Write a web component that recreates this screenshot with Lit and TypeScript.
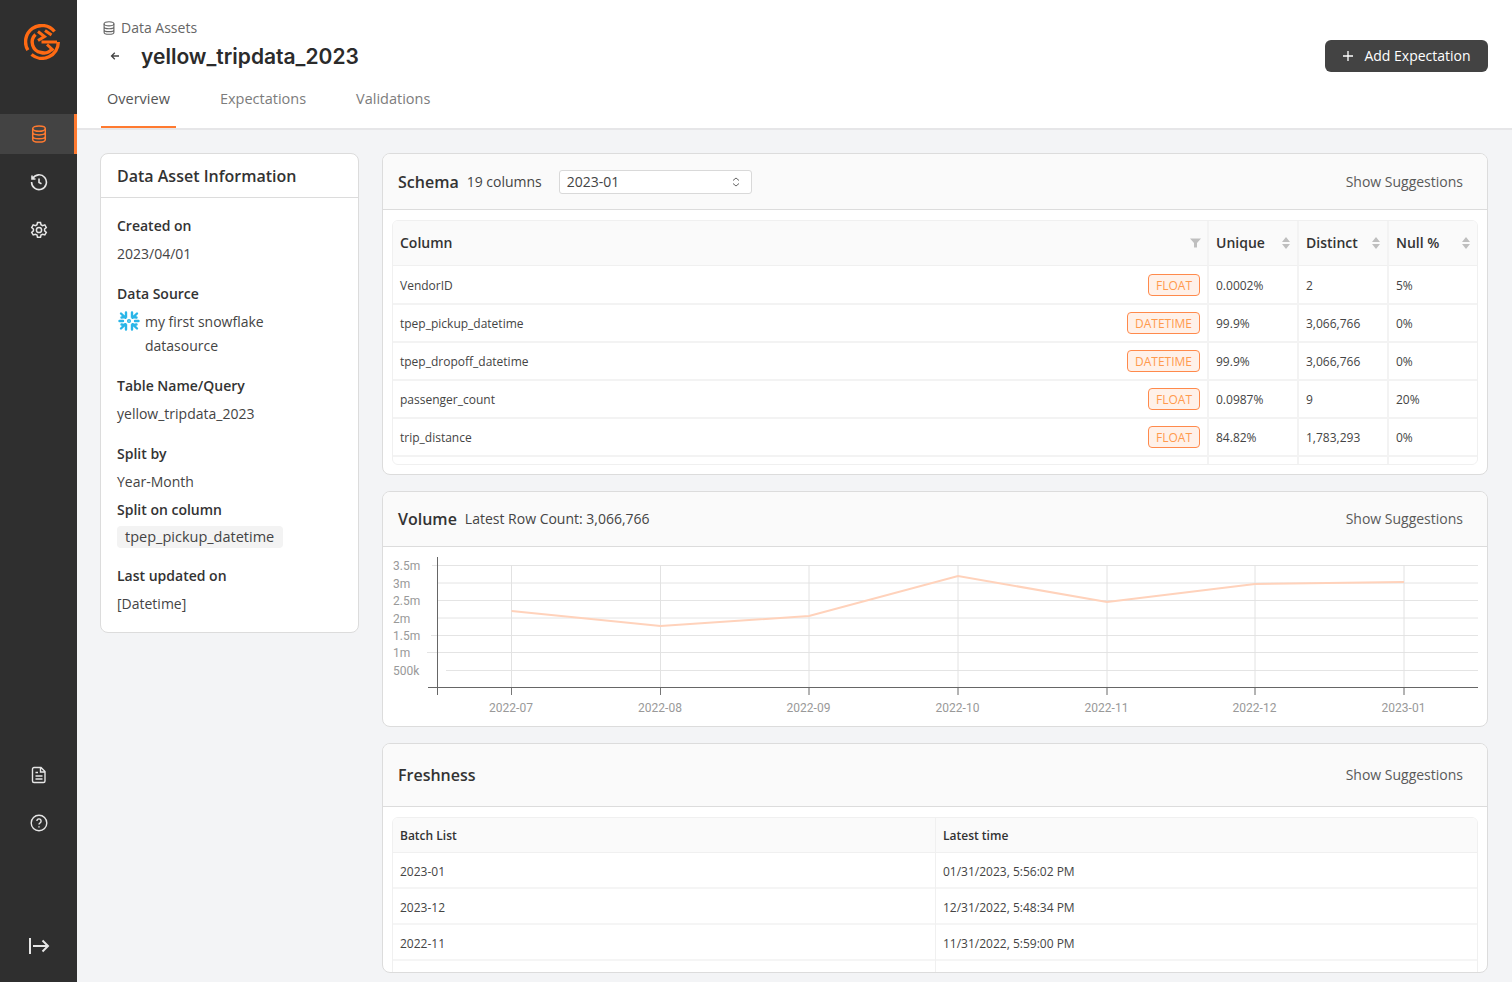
import { LitElement, html, css, svg } from "lit";
import { customElement } from "lit/decorators.js";

const rows = [
  ["VendorID", "FLOAT", "0.0002%", "2", "5%"],
  ["tpep_pickup_datetime", "DATETIME", "99.9%", "3,066,766", "0%"],
  ["tpep_dropoff_datetime", "DATETIME", "99.9%", "3,066,766", "0%"],
  ["passenger_count", "FLOAT", "0.0987%", "9", "20%"],
  ["trip_distance", "FLOAT", "84.82%", "1,783,293", "0%"],
  ["", "", "", "", ""],
];
const fresh = [
  ["2023-01", "01/31/2023, 5:56:02 PM"],
  ["2023-12", "12/31/2022, 5:48:34 PM"],
  ["2022-11", "11/31/2022, 5:59:00 PM"],
  ["", ""],
];

const dbIcon = (size: number) => html`<svg width=${size} height=${size} viewBox="0 0 16 16" fill="none" stroke="currentColor" stroke-width="1.3"><ellipse cx="8" cy="3.2" rx="5.6" ry="2.4"/><path d="M2.4 3.2v9.600c0 1.300 2.500 2.400 5.600 2.400s5.600-1.100 5.600-2.400V3.200M2.400 6.500c0 1.300 2.500 2.300 5.600 2.300s5.600-1 5.600-2.300M2.400 9.900c0 1.300 2.500 2.300 5.600 2.300s5.600-1 5.600-2.300"/></svg>`;

const sorter = html`<svg class="sorter" width="10" height="14" viewBox="0 0 10 14" fill="#bfbfbf"><path d="M5 1l4 5H1zM5 13L1 8h8z"/></svg>`;

const chartX = [128.5, 277.5, 426, 575, 724, 872, 1021];
const chartY = [64, 79, 69, 29, 55, 37, 35];
const months = ["2022-07", "2022-08", "2022-09", "2022-10", "2022-11", "2022-12", "2023-01"];
const grids: [string, number, number][] = [
  ["3.5m", 18.5, 49], ["3m", 36, 54.5], ["2.5m", 53.5, 54.5], ["2m", 71, 54.5],
  ["1.5m", 88.5, 48], ["1m", 105.5, 44], ["500k", 123.5, 63],
];

@customElement("app-root")
export class AppRoot extends LitElement {
  static styles = css`
    :host { display: flex; width: 1512px; height: 982px; overflow: hidden; background: #f3f4f6; font-family: "Open Sans", sans-serif; color: #333; }
    .side { width: 77px; flex: none; background: #2f2f2f; display: flex; flex-direction: column; color: #e6e6e6; }
    .logo { height: 114px; flex: none; display: flex; justify-content: center; padding: 24px 0 0 7px; box-sizing: border-box; }
    .nav { height: 48px; display: flex; align-items: center; justify-content: center; flex: none; }
    .nav.active { height: 40px; margin-bottom: 4px; background: #434343; color: #ff7a30; border-right: 3px solid #ff7a30; padding-left: 3px; box-sizing: border-box; }
    .spacer { flex: 1; }
    .collapse { height: 135px; flex: none; display: flex; justify-content: center; padding-top: 90px; box-sizing: border-box; }
    .main { flex: 1; min-width: 0; display: flex; flex-direction: column; }
    .head { height: 130px; flex: none; box-sizing: border-box; background: #fff; border-bottom: 2px solid #e6e6e8; padding: 0 24px; display: flex; flex-direction: column; }
    .crumb { display: flex; align-items: center; gap: 5px; margin-top: 18px; padding-left: 1px; height: 20px; font-size: 14px; line-height: 20px; color: #666; }
    .titlerow { display: flex; align-items: center; height: 36px; justify-content: space-between; }
    .titleleft { display: flex; align-items: center; }
    .back { width: 40px; display: flex; padding-left: 9px; box-sizing: border-box; color: #444; }
    h1 { margin: 0; font-family: Inter, sans-serif; font-weight: 600; font-size: 21px; color: #2b2b2b; }
    .add { width: 163px; height: 32px; border-radius: 6px; background: #434343; color: #fff; display: flex; align-items: center; justify-content: center; gap: 10px; font-size: 14px; line-height: 20px; }
    .tabs { display: flex; gap: 38px; margin-top: 7px; flex: 1; }
    .tab { padding: 8px 6px 0; font-size: 14.5px; line-height: 20px; color: #7c7c7c; box-sizing: border-box; }
    .tab.on { color: #555; border-bottom: 2px solid #ff7a30; }
    .content { flex: 1; display: flex; gap: 23px; align-items: flex-start; padding: 23px 24px 0 23px; min-height: 0; }
    .info { width: 259px; flex: none; height: 480px; box-sizing: border-box; background: #fff; border: 1px solid #dcdcdc; border-radius: 8px; }
    .info h2 { margin: 0; height: 43px; line-height: 44px; padding: 0 16px; font-size: 16px; font-weight: 600; color: #333; border-bottom: 1px solid #dcdcdc; }
    .infobody { padding: 18px 16px 0; font-size: 14px; line-height: 24px; color: #444; }
    .lab { font-weight: 600; color: #333; height: 20px; line-height: 20px; }
    .lab.tight { margin-top: 6px; }
    .val { height: 24px; line-height: 24px; margin-top: 6px; }
    .src { display: grid; grid-template-columns: 28px 135px; margin-top: 6px; }
    .src svg { margin-left: 1px; }
    .pill { display: inline-block; background: #f3f3f3; border-radius: 4px; padding: 0 9px 0 8px; height: 22px; line-height: 22px; margin-top: 6px; color: #444; font-size: 14.5px; }
    .gap { height: 18px; }
    .gap.short { height: 17px; }
    .col { flex: 1; min-width: 0; display: flex; flex-direction: column; gap: 16px; }
    .card { background: #fff; border: 1px solid #dcdcdc; border-radius: 8px; overflow: hidden; box-sizing: border-box; }
    .chead { background: #fafafa; border-bottom: 1px solid #dcdcdc; display: flex; align-items: center; padding: 0 24px 0 15px; font-size: 14px; line-height: 20px; color: #444; box-sizing: border-box; }
    .ctitle { font-size: 16px; font-weight: 600; color: #333; margin-right: 8px; }
    .sugg { margin-left: auto; color: #595959; }
    .select { margin-left: 17px; width: 193px; height: 24px; box-sizing: border-box; border: 1px solid #d9d9d9; border-radius: 3px; background: #fff; display: flex; align-items: center; justify-content: space-between; padding: 0 11px 0 7px; color: #444; }
    .schema { height: 322px; }
    .schema .chead { height: 56px; }
    .tablewrap { margin: 10px 9px 0; height: 245px; border: 1px solid #f0f0f0; border-radius: 6px; overflow: hidden; box-sizing: border-box; }
    .grid { display: grid; grid-template-columns: 816px 90px 90px 1fr; font-size: 12px; color: #444; }
    .th { height: 45px; box-sizing: border-box; background: #fafafa; border-bottom: 1px solid #f0f0f0; border-right: 2px solid #f3f3f3; font-size: 14px; line-height: 20px; font-weight: 600; color: #333; display: flex; align-items: center; justify-content: space-between; padding: 0 6px 1px 7px; }
    .td { height: 38px; box-sizing: border-box; box-shadow: 0 1px 0 #f3f3f3, inset 0 -1px 0 #f3f3f3; border-right: 2px solid #f3f3f3; display: flex; align-items: center; padding: 0 7px; }
    .th.last, .td.last { border-right: 0; }
    .tag { margin-left: auto; height: 22px; box-sizing: border-box; border: 1px solid #ff8a4c; border-radius: 4px; background: #fff1e9; color: #ff9a4d; padding: 0 7px; line-height: 21px; font-size: 12px; }
    .tag.blank { width: 53px; }
    .volume { height: 236px; }
    .volume .chead { height: 55px; }
    .chart { display: block; }
    .chart text { font-family: Roboto, sans-serif; font-size: 12px; fill: #999; }
    .fresh { height: 230px; }
    .fresh .chead { height: 63px; }
    .ftable { margin: 10px 9px 0; height: 160px; border: 1px solid #f0f0f0; border-radius: 6px 6px 0 0; overflow: hidden; box-sizing: border-box; display: grid; grid-template-columns: 543px 1fr; grid-auto-rows: min-content; font-size: 12px; color: #444; }
    .fh { height: 35px; box-sizing: border-box; background: #fafafa; border-bottom: 1px solid #f0f0f0; font-weight: 600; color: #333; display: flex; align-items: center; padding: 0 7px; }
    .fd { height: 36px; box-sizing: border-box; box-shadow: inset 0 -2px 0 #f5f5f5; display: flex; align-items: center; padding: 0 7px; }
    .fh.a, .fd.a { border-right: 1px solid #f0f0f0; }
  `;

  chart() {
    return html`<svg class="chart" width="1104" height="179" viewBox="0 0 1104 179">
      ${grids.map(([l, y, x]) => svg`<line x1=${x} x2="1095" y1=${y} y2=${y} stroke="#e4e4e4"/><text x="10" y=${y + 4.5}>${l}</text>`)}
      ${chartX.map((x) => svg`<line x1=${x} x2=${x} y1="18" y2="148" stroke="#e2e2e2"/>`)}
      ${chartX.map((x) => svg`<line x1=${x} x2=${x} y1="140" y2="148" stroke="#777"/>`)}
      <line x1="54.5" x2="54.5" y1="10" y2="148" stroke="#666"/>
      <line x1="45" x2="1095" y1="140.5" y2="140.5" stroke="#666"/>
      <polyline fill="none" stroke="#ffd2bb" stroke-width="2" points=${chartX.map((x, i) => `${x},${chartY[i]}`).join(" ")}/>
      ${chartX.map((x, i) => svg`<text x=${x - 0.5} y="165" text-anchor="middle">${months[i]}</text>`)}
    </svg>`;
  }

  render() {
    return html`
      <aside class="side">
        <div class="logo">
          <svg width="36" height="36" viewBox="0 0 36 36" fill="none" stroke="#ff6a13" stroke-width="3.400">
            <path d="M30.500 7.500A16.300 16.300 0 0 0 3.900 26.200"/>
            <path d="M7.500 30.500A16.300 16.300 0 0 0 34.300 18"/>
            <path d="M11.500 10.500A10.500 10.500 0 0 0 17 28.500 10.500 10.500 0 0 0 28 25"/>
            <path d="M14 7.500L20.500 12.500 14 16.500 M17.500 18H33 M23 20.500L29.500 26.500 M21 6.500L27.500 11" stroke-width="3"/>
          </svg>
        </div>
        <div class="nav active">${dbIcon(18)}</div>
        <div class="nav"><svg width="18" height="18" viewBox="0 0 18 18" fill="none" stroke="currentColor" stroke-width="1.600"><path d="M2.600 5.500A7.400 7.400 0 1 1 1.600 9M2 2.500v3.500h3.500M9 5.500V9.500l2.500 1.200"/></svg></div>
        <div class="nav"><svg width="18" height="18" viewBox="0 0 18 18" fill="none" stroke="currentColor" stroke-width="1.500"><path d="M7.500 1.500h3l.5 2.200 1.600.9 2.200-.7 1.500 2.600-1.700 1.500v1.800l1.700 1.500-1.500 2.600-2.200-.7-1.600.9-.5 2.200h-3l-.5-2.200-1.600-.9-2.200.7-1.500-2.600 1.700-1.500V8l-1.700-1.500L3.200 3.900l2.200.7 1.600-.9z"/><circle cx="9" cy="9" r="2.600"/></svg></div>
        <div class="spacer"></div>
        <div class="nav"><svg width="18" height="18" viewBox="0 0 18 18" fill="none" stroke="currentColor" stroke-width="1.400"><path d="M4 1.500h7l4 4v9.500a1.500 1.500 0 0 1-1.500 1.500h-9.500a1.500 1.500 0 0 1-1.500-1.500v-12a1.500 1.500 0 0 1 1.500-1.500zM10.500 1.500V6h4.500M5.500 6.500h2.500M5.500 10h7M5.500 13h7"/></svg></div>
        <div class="nav"><svg width="18" height="18" viewBox="0 0 18 18" fill="none" stroke="currentColor" stroke-width="1.400"><circle cx="9" cy="9" r="7.800"/><path d="M6.900 7a2.100 2.100 0 1 1 3.200 1.800c-.7.400-1.100.8-1.100 1.700M9 12.200v1.200"/></svg></div>
        <div class="collapse"><svg width="22" height="18" viewBox="0 0 22 18" fill="none" stroke="currentColor" stroke-width="2"><path d="M2 1v16M5 9h15M14.500 3.500L20 9l-5.500 5.500"/></svg></div>
      </aside>
      <main class="main">
        <header class="head">
          <div class="crumb">${dbIcon(14)}<span>Data Assets</span></div>
          <div class="titlerow">
            <div class="titleleft">
              <span class="back"><svg width="10" height="10" viewBox="0 0 10 10" fill="none" stroke="currentColor" stroke-width="1.300"><path d="M9 5H1.500M4.800 1.800L1.500 5l3.300 3.200"/></svg></span>
              <h1>yellow_tripdata_2023</h1>
            </div>
            <div class="add"><svg width="12" height="12" viewBox="0 0 12 12" stroke="#fff" stroke-width="1.300"><path d="M6 1v10M1 6h10"/></svg><span>Add Expectation</span></div>
          </div>
          <nav class="tabs">
            <div class="tab on">Overview</div>
            <div class="tab">Expectations</div>
            <div class="tab">Validations</div>
          </nav>
        </header>
        <div class="content">
          <section class="info">
            <h2>Data Asset Information</h2>
            <div class="infobody">
              <div class="lab">Created on</div><div class="val">2023/04/01</div>
              <div class="gap"></div>
              <div class="lab">Data Source</div>
              <div class="src">
                <svg width="22" height="22" viewBox="0 0 22 22" fill="none" stroke="#29b5e8" stroke-width="2.400" stroke-linecap="round"><path d="M3 3.500L7.500 7.800M19 3.500L14.500 7.800M3 18.500L7.500 14.200M19 18.500L14.500 14.200M8 2.500V6.800L3.500 7.500M14 2.500V6.800L18.500 7.500M8 19.500V15.200L3.500 14.500M14 19.500V15.200L18.500 14.500M1.500 11H5M17 11H20.500"/><circle cx="11" cy="11" r="1.300" stroke-width="1.500"/></svg>
                <span>my first snowflake datasource</span>
              </div>
              <div class="gap"></div>
              <div class="lab">Table Name/Query</div><div class="val">yellow_tripdata_2023</div>
              <div class="gap"></div>
              <div class="lab">Split by</div><div class="val">Year-Month</div>
              <div class="lab tight">Split on column</div>
              <div class="pill">tpep_pickup_datetime</div>
              <div class="gap short"></div>
              <div class="lab">Last updated on</div><div class="val">[Datetime]</div>
            </div>
          </section>
          <div class="col">
            <section class="card schema">
              <div class="chead">
                <span class="ctitle">Schema</span><span>19 columns</span>
                <div class="select"><span>2023-01</span><svg width="8" height="12" viewBox="0 0 8 12" fill="none" stroke="#666" stroke-width="1"><path d="M1 4.500L4 2l3 2.500M1 7.500L4 10l3-2.500"/></svg></div>
                <span class="sugg">Show Suggestions</span>
              </div>
              <div class="tablewrap">
                <div class="grid">
                  <div class="th">Column<svg width="11" height="10" viewBox="0 0 11 10" fill="#bfbfbf"><path d="M0 .5h11L7 5v4.500H4V5z"/></svg></div>
                  <div class="th">Unique${sorter}</div>
                  <div class="th">Distinct${sorter}</div>
                  <div class="th last">Null %${sorter}</div>
                  ${rows.map((r) => html`
                    <div class="td">${r[0]}<span class="tag ${r[1] ? "" : "blank"}">${r[1]}</span></div>
                    <div class="td">${r[2]}</div>
                    <div class="td">${r[3]}</div>
                    <div class="td last">${r[4]}</div>`)}
                </div>
              </div>
            </section>
            <section class="card volume">
              <div class="chead"><span class="ctitle">Volume</span><span>Latest Row Count: 3,066,766</span><span class="sugg">Show Suggestions</span></div>
              ${this.chart()}
            </section>
            <section class="card fresh">
              <div class="chead"><span class="ctitle">Freshness</span><span class="sugg">Show Suggestions</span></div>
              <div class="ftable">
                <div class="fh a">Batch List</div><div class="fh">Latest time</div>
                ${fresh.map((r) => html`<div class="fd a">${r[0]}</div><div class="fd">${r[1]}</div>`)}
              </div>
            </section>
          </div>
        </div>
      </main>
    `;
  }
}
